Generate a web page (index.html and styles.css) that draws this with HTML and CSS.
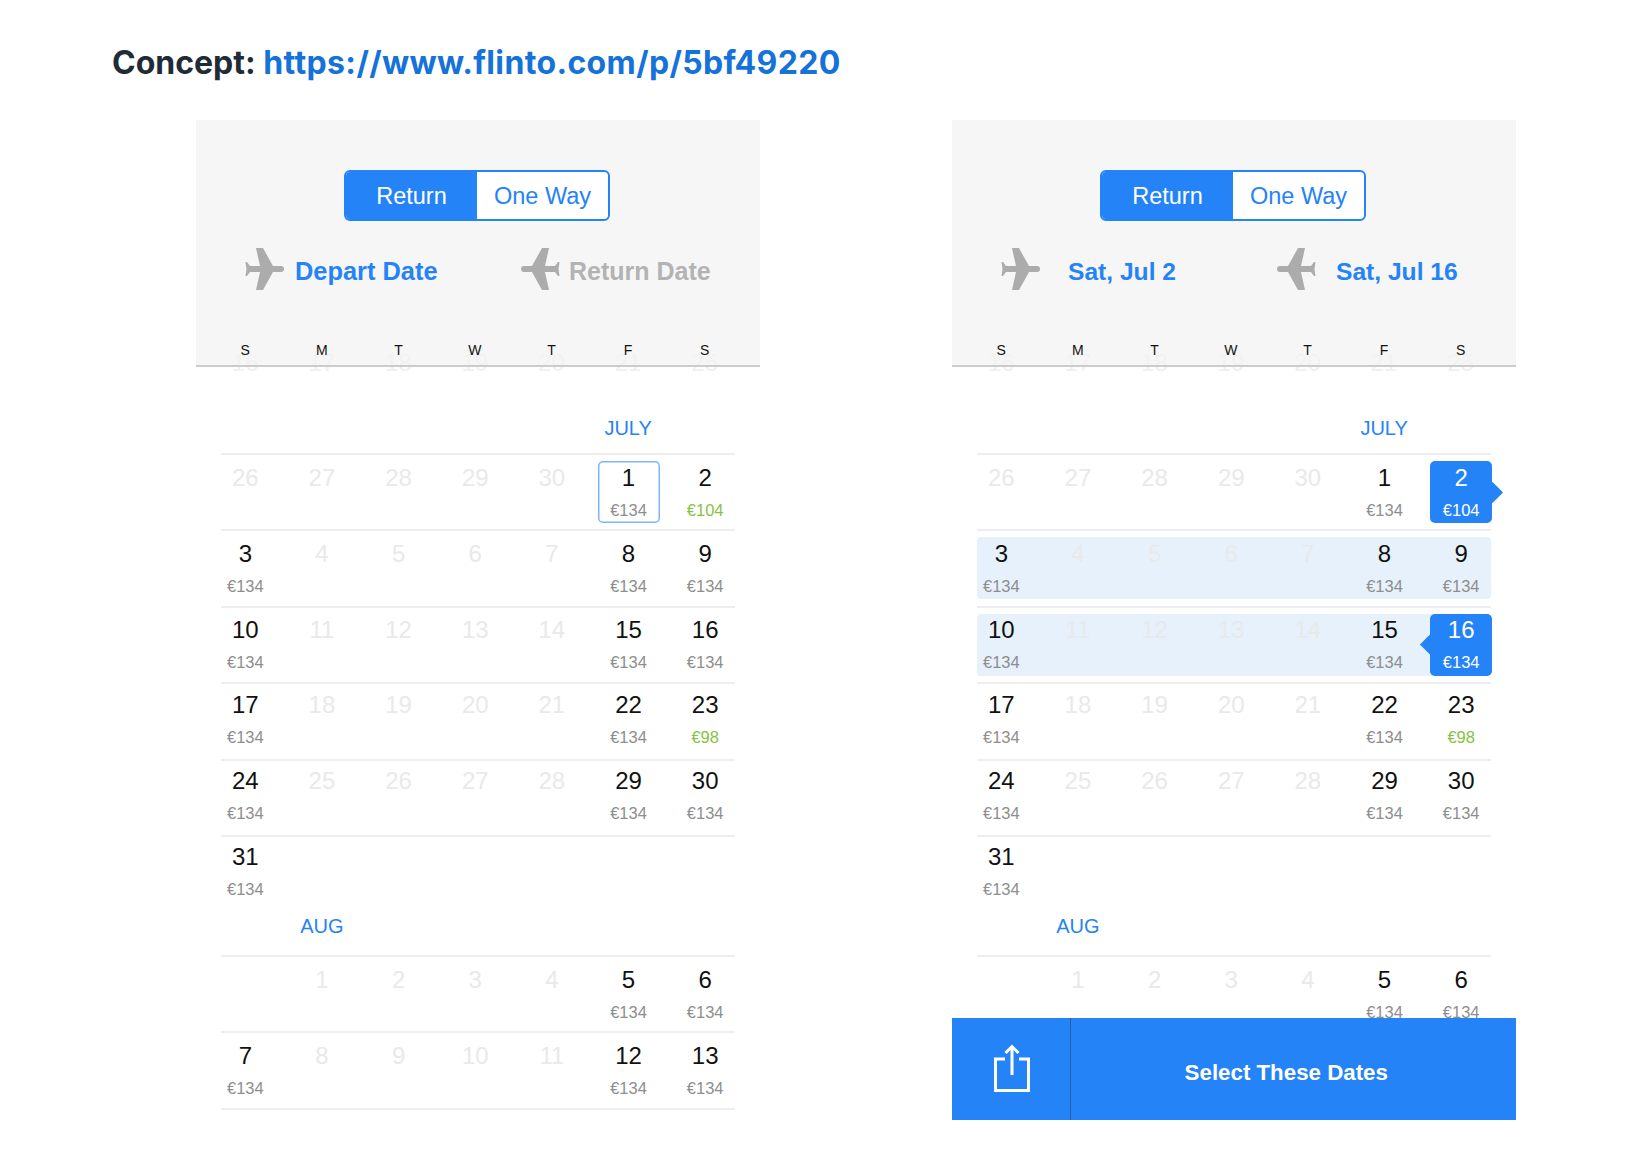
FILE: index.html
```html
<!DOCTYPE html>
<html lang="en">
<head>
  <meta charset="UTF-8" />
  <title>Concept</title>
  <link rel="stylesheet" href="styles.css">
</head>
<body>
  <svg class="defs" width="0" height="0">
    <symbol id="plane" viewBox="0 0 40 42">
      <path d="M12 0h7l10 18h8a3 3 0 0 1 0 6h-8L19 42h-7l4-18H6l-3 4H1.500l1-7-1-7H3l3 4h10z" />
    </symbol>
  </svg>

  <h1 class="headline">Concept: <a href="#">https://www.flinto.com/p/5bf49220</a></h1>

  <div class="screens">
    <div class="phone">
      <div class="top">
        <div class="segment"><div class="seg on">Return</div><div class="seg">One Way</div></div>
        <div class="dates">
          <div class="date-item depart"><svg class="plane"><use href="#plane" /></svg><span class="date-text">Depart Date</span></div>
          <div class="date-item back"><svg class="plane flip"><use href="#plane" /></svg><span class="date-text empty">Return Date</span></div>
        </div>
        <div class="weekdays"><span>S</span><span>M</span><span>T</span><span>W</span><span>T</span><span>F</span><span>S</span></div>
      </div>
      <div class="calendar">
        <div class="ghost"><span>16</span><span>17</span><span>18</span><span>19</span><span>20</span><span>21</span><span>25</span></div>
        <div class="month july"><span>JULY</span></div>
        <div class="week"><div class="band"><div class="days">
          <div class="day off">26</div><div class="day off">27</div><div class="day off">28</div><div class="day off">29</div><div class="day off">30</div>
          <div class="day outlined"><span class="num">1</span><span class="price">€134</span></div>
          <div class="day"><span class="num">2</span><span class="price deal">€104</span></div>
        </div></div></div>
        <div class="week"><div class="band"><div class="days">
          <div class="day"><span class="num">3</span><span class="price">€134</span></div>
          <div class="day off">4</div><div class="day off">5</div><div class="day off">6</div><div class="day off">7</div>
          <div class="day"><span class="num">8</span><span class="price">€134</span></div>
          <div class="day"><span class="num">9</span><span class="price">€134</span></div>
        </div></div></div>
        <div class="week up-1"><div class="band"><div class="days">
          <div class="day"><span class="num">10</span><span class="price">€134</span></div>
          <div class="day off">11</div><div class="day off">12</div><div class="day off">13</div><div class="day off">14</div>
          <div class="day"><span class="num">15</span><span class="price">€134</span></div>
          <div class="day"><span class="num">16</span><span class="price">€134</span></div>
        </div></div></div>
        <div class="week up-2"><div class="band"><div class="days">
          <div class="day"><span class="num">17</span><span class="price">€134</span></div>
          <div class="day off">18</div><div class="day off">19</div><div class="day off">20</div><div class="day off">21</div>
          <div class="day"><span class="num">22</span><span class="price">€134</span></div>
          <div class="day"><span class="num">23</span><span class="price deal">€98</span></div>
        </div></div></div>
        <div class="week up-3"><div class="band"><div class="days">
          <div class="day"><span class="num">24</span><span class="price">€134</span></div>
          <div class="day off">25</div><div class="day off">26</div><div class="day off">27</div><div class="day off">28</div>
          <div class="day"><span class="num">29</span><span class="price">€134</span></div>
          <div class="day"><span class="num">30</span><span class="price">€134</span></div>
        </div></div></div>
        <div class="week up-3"><div class="band"><div class="days">
          <div class="day"><span class="num">31</span><span class="price">€134</span></div>
        </div></div></div>
        <div class="month aug"><span>AUG</span></div>
        <div class="week"><div class="band"><div class="days">
          <div class="day"></div>
          <div class="day off">1</div><div class="day off">2</div><div class="day off">3</div><div class="day off">4</div>
          <div class="day"><span class="num">5</span><span class="price">€134</span></div>
          <div class="day"><span class="num">6</span><span class="price">€134</span></div>
        </div></div></div>
        <div class="week last"><div class="band"><div class="days">
          <div class="day"><span class="num">7</span><span class="price">€134</span></div>
          <div class="day off">8</div><div class="day off">9</div><div class="day off">10</div><div class="day off">11</div>
          <div class="day"><span class="num">12</span><span class="price">€134</span></div>
          <div class="day"><span class="num">13</span><span class="price">€134</span></div>
        </div></div></div>
      </div>
    </div>

    <div class="phone">
      <div class="top">
        <div class="segment"><div class="seg on">Return</div><div class="seg">One Way</div></div>
        <div class="dates">
          <div class="date-item depart picked-dates"><svg class="plane"><use href="#plane" /></svg><span class="date-text">Sat, Jul 2</span></div>
          <div class="date-item back picked-dates"><svg class="plane flip"><use href="#plane" /></svg><span class="date-text">Sat, Jul 16</span></div>
        </div>
        <div class="weekdays"><span>S</span><span>M</span><span>T</span><span>W</span><span>T</span><span>F</span><span>S</span></div>
      </div>
      <div class="calendar">
        <div class="ghost"><span>16</span><span>17</span><span>18</span><span>19</span><span>20</span><span>21</span><span>25</span></div>
        <div class="month july"><span>JULY</span></div>
        <div class="week"><div class="band"><div class="days">
          <div class="day off">26</div><div class="day off">27</div><div class="day off">28</div><div class="day off">29</div><div class="day off">30</div>
          <div class="day"><span class="num">1</span><span class="price">€134</span></div>
          <div class="day selected out"><span class="num">2</span><span class="price">€104</span></div>
        </div></div></div>
        <div class="week"><div class="band in-range"><div class="days">
          <div class="day"><span class="num">3</span><span class="price">€134</span></div>
          <div class="day off">4</div><div class="day off">5</div><div class="day off">6</div><div class="day off">7</div>
          <div class="day"><span class="num">8</span><span class="price">€134</span></div>
          <div class="day"><span class="num">9</span><span class="price">€134</span></div>
        </div></div></div>
        <div class="week up-1"><div class="band in-range"><div class="days">
          <div class="day"><span class="num">10</span><span class="price">€134</span></div>
          <div class="day off">11</div><div class="day off">12</div><div class="day off">13</div><div class="day off">14</div>
          <div class="day"><span class="num">15</span><span class="price">€134</span></div>
          <div class="day selected in"><span class="num">16</span><span class="price">€134</span></div>
        </div></div></div>
        <div class="week up-2"><div class="band"><div class="days">
          <div class="day"><span class="num">17</span><span class="price">€134</span></div>
          <div class="day off">18</div><div class="day off">19</div><div class="day off">20</div><div class="day off">21</div>
          <div class="day"><span class="num">22</span><span class="price">€134</span></div>
          <div class="day"><span class="num">23</span><span class="price deal">€98</span></div>
        </div></div></div>
        <div class="week up-3"><div class="band"><div class="days">
          <div class="day"><span class="num">24</span><span class="price">€134</span></div>
          <div class="day off">25</div><div class="day off">26</div><div class="day off">27</div><div class="day off">28</div>
          <div class="day"><span class="num">29</span><span class="price">€134</span></div>
          <div class="day"><span class="num">30</span><span class="price">€134</span></div>
        </div></div></div>
        <div class="week up-3"><div class="band"><div class="days">
          <div class="day"><span class="num">31</span><span class="price">€134</span></div>
        </div></div></div>
        <div class="month aug"><span>AUG</span></div>
        <div class="week"><div class="band"><div class="days">
          <div class="day"></div>
          <div class="day off">1</div><div class="day off">2</div><div class="day off">3</div><div class="day off">4</div>
          <div class="day"><span class="num">5</span><span class="price">€134</span></div>
          <div class="day"><span class="num">6</span><span class="price">€134</span></div>
        </div></div></div>
      </div>
      <div class="action-bar">
        <div class="share">
          <svg class="share-icon" viewBox="0 0 36 48" width="36" height="48">
            <path d="M11 15H1.500v31.500h33V15H25M18 31V3M11.500 9 18 2.500 24.500 9" />
          </svg>
        </div>
        <div class="select-btn">Select These Dates</div>
      </div>
    </div>
  </div>
</body>
</html>
```

FILE: styles.css
```css
* { box-sizing: border-box; }
body { margin: 0; background: #fff; font-family: "Liberation Sans", Arial, sans-serif; }
.defs { position: absolute; }

.headline {
  margin: 0; height: 120px;
  padding: 43px 0 0 112px;
  font-family: Inter, sans-serif;
  font-size: 32px; line-height: 40px; font-weight: 700;
  color: #1f2c38;
}
.headline a { color: #1572d9; text-decoration: none; letter-spacing: 0.350px; }

.screens { display: flex; gap: 192.500px; padding-left: 196px; }
.phone { position: relative; width: 563.500px; height: 1000px; overflow: hidden; }

.top {
  position: relative; z-index: 2;
  height: 247px;
  padding-top: 50px;
  background: rgba(242, 242, 242, 0.7);
  border-bottom: 2px solid #ccc;
}
.segment {
  display: flex;
  width: 266px; height: 51px;
  margin-left: 148px;
  border: 2px solid #2583f8; border-radius: 6px;
  background: #fff; overflow: hidden;
}
.seg {
  flex: 1;
  display: flex; align-items: center; justify-content: center;
  padding-top: 1px;
  font-size: 23.500px; color: #2583f8;
}
.seg.on { background: #2583f8; color: #fff; }

.dates { display: flex; margin-top: 27px; height: 42px; padding-left: 48px; }
.date-item { display: flex; align-items: center; gap: 8px; }
.date-item.depart { width: 277px; gap: 11px; }
.date-item.picked-dates.depart { gap: 28px; }
.date-item.picked-dates.back { gap: 19px; }
.plane { width: 40px; height: 42px; fill: #acacac; }
.plane.flip { transform: scaleX(-1); }
.date-text { margin-top: 4px; font-size: 25.400px; font-weight: bold; color: #2583f8; }
.date-text.empty { font-size: 25px; color: #b3b3b3; }
.picked-dates .date-text { margin-top: 6px; font-size: 24.600px; }

.weekdays, .ghost {
  display: grid;
  grid-template-columns: repeat(7, 76.570px);
  padding-left: 11px;
  text-align: center;
}
.weekdays { margin-top: 50px; font-size: 14px; line-height: 20px; color: #111; }

.calendar { margin-top: -14px; }
.ghost { height: 20px; font-size: 24px; line-height: 20px; color: #f0f0f0; }

.month {
  display: grid;
  grid-template-columns: repeat(7, 76.570px);
  padding-left: 11px;
  font-size: 20px; line-height: 24px;
  text-align: center; color: #2583f8;
}
.month.july { margin-top: 43px; padding-bottom: 13px; }
.month.july span { grid-column: 6; }
.month.aug { margin-top: 2.500px; padding-bottom: 16.500px; }
.month.aug span { grid-column: 2; }

.week {
  height: 76.450px;
  margin: 0 25px;
  padding-top: 6px;
  border-top: 2px solid #eee;
}
.week.last { height: 79px; border-bottom: 2px solid #eee; }
.band { height: 62px; border-radius: 4px; }
.band.in-range { background: #e6f1fb; }
.days {
  display: grid;
  grid-template-columns: repeat(7, 1fr);
  margin: 0 -9px 0 -14px;
}
.day {
  position: relative;
  justify-self: center;
  width: 62px; height: 62px;
  display: flex; flex-direction: column; align-items: center;
  border-radius: 5px;
}
.day.off { font-size: 24px; line-height: 34px; color: #e9e9e9; }
.num { font-size: 24px; line-height: 34px; color: #111; }
.price { margin-top: 1px; font-size: 16.500px; line-height: 28px; color: #8e8e8e; }
.price.deal { color: #85c243; }

/* the numbers creep up against the lines further down the month */
.up-1 .num { margin-top: -1px; }
.up-1 .day.off { line-height: 32px; }
.up-2 .num { margin-top: -2px; }
.up-2 .day.off { line-height: 30px; }
.up-3 .num { margin-top: -3px; }
.up-3 .day.off { line-height: 28px; }

.day.outlined { box-shadow: inset 0 0 0 1.500px #7db6f8; }
.day.selected { background: #2583f8; }
.day.selected .num, .day.selected .price { position: relative; color: #fff; }
.day.selected::after {
  content: "";
  position: absolute; top: 23.500px;
  width: 15px; height: 15px;
  background: #2583f8;
  transform: rotate(45deg);
}
.day.selected.out::after { right: -7.500px; }
.day.selected.in::after { left: -7.500px; }

.action-bar {
  position: absolute; left: 0; right: 0; bottom: 0;
  z-index: 3;
  display: flex;
  height: 102px;
  background: #2583f8;
}
.share {
  width: 119px; padding: 26px 0 0 42px;
  border-right: 1px solid #2a5f9f;
}
.share-icon { display: block; fill: none; stroke: #fff; stroke-width: 3; }
.select-btn {
  flex: 1;
  display: flex; align-items: center; justify-content: center;
  padding: 8px 14px 0 0;
  font-size: 22.300px; font-weight: bold; color: #fff;
}
```
